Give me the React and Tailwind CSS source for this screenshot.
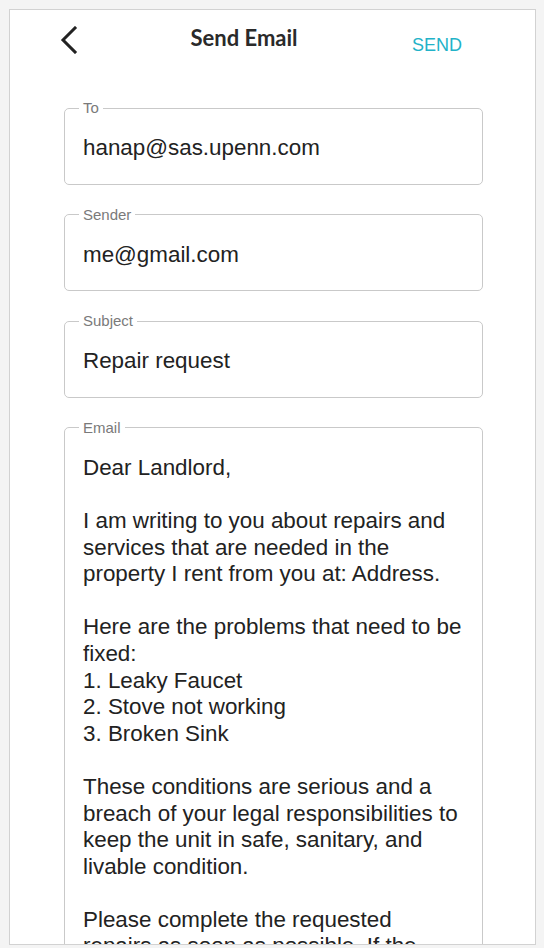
import React from 'react';

const fields = [
  { label: 'To', value: 'hanap@sas.upenn.com' },
  { label: 'Sender', value: 'me@gmail.com' },
  { label: 'Subject', value: 'Repair request' },
];

const emailLines = [
  'Dear Landlord,',
  '',
  'I am writing to you about repairs and',
  'services that are needed in the',
  'property I rent from you at: Address.',
  '',
  'Here are the problems that need to be',
  'fixed:',
  '1. Leaky Faucet',
  '2. Stove not working',
  '3. Broken Sink',
  '',
  'These conditions are serious and a',
  'breach of your legal responsibilities to',
  'keep the unit in safe, sanitary, and',
  'livable condition.',
  '',
  'Please complete the requested',
  'repairs as soon as possible. If the',
  'repairs are not made, I may take',
  'further action.',
];

const Field = ({ label, children }) => (
  <fieldset className="border border-[#c9c9c9] rounded-[5px] pl-[18px] pr-[6px] pt-[19px] pb-[22px]">
    <legend className="-ml-[4px] px-[4px] text-[15px] leading-[16px] text-[#7a7a7a]">{label}</legend>
    <div className="text-[22.4px] leading-[26.6px] text-[#222222]">{children}</div>
  </fieldset>
);

const App = () => {
  return (
    <div
      className="h-[948px] overflow-hidden bg-[#f4f4f4] pt-[9px] pl-[9px]"
      style={{ fontFamily: '"Liberation Sans", Arial, sans-serif' }}
    >
      <div className="w-[527px] h-[936px] overflow-hidden bg-white border border-[#d2d2d2]">
        {/* header */}
        <div className="flex items-start pl-[39px] pr-[73px] pt-[15px]">
          <div className="w-[50px] pt-[1px] pl-[10px]">
            <svg width="20" height="28" viewBox="0 0 20 28" fill="none">
              <polyline points="16,2 4,14 16,26" stroke="#222222" strokeWidth="3" strokeLinecap="square" />
            </svg>
          </div>
          <div
            className="w-[290px] text-center text-[22px] leading-[26px] font-bold text-[#2a2a2a]"
            style={{ fontFamily: 'Lato, "Liberation Sans", sans-serif' }}
          >
            Send Email
          </div>
          <div className="flex-1 text-right pt-[10px] text-[18px] leading-[20px] text-[#22b2c8]">SEND</div>
        </div>

        {/* form */}
        <div className="pl-[54px] pr-[52px] pt-[45px] flex flex-col gap-[22px]">
          {fields.map((f, i) => (
            <Field key={i} label={f.label}>
              {f.value}
            </Field>
          ))}
          <Field label="Email">
            {emailLines.map((line, i) => (
              <div key={i} className="whitespace-nowrap h-[26.6px]">
                {line}
              </div>
            ))}
          </Field>
        </div>
      </div>
    </div>
  );
};

export default App;
